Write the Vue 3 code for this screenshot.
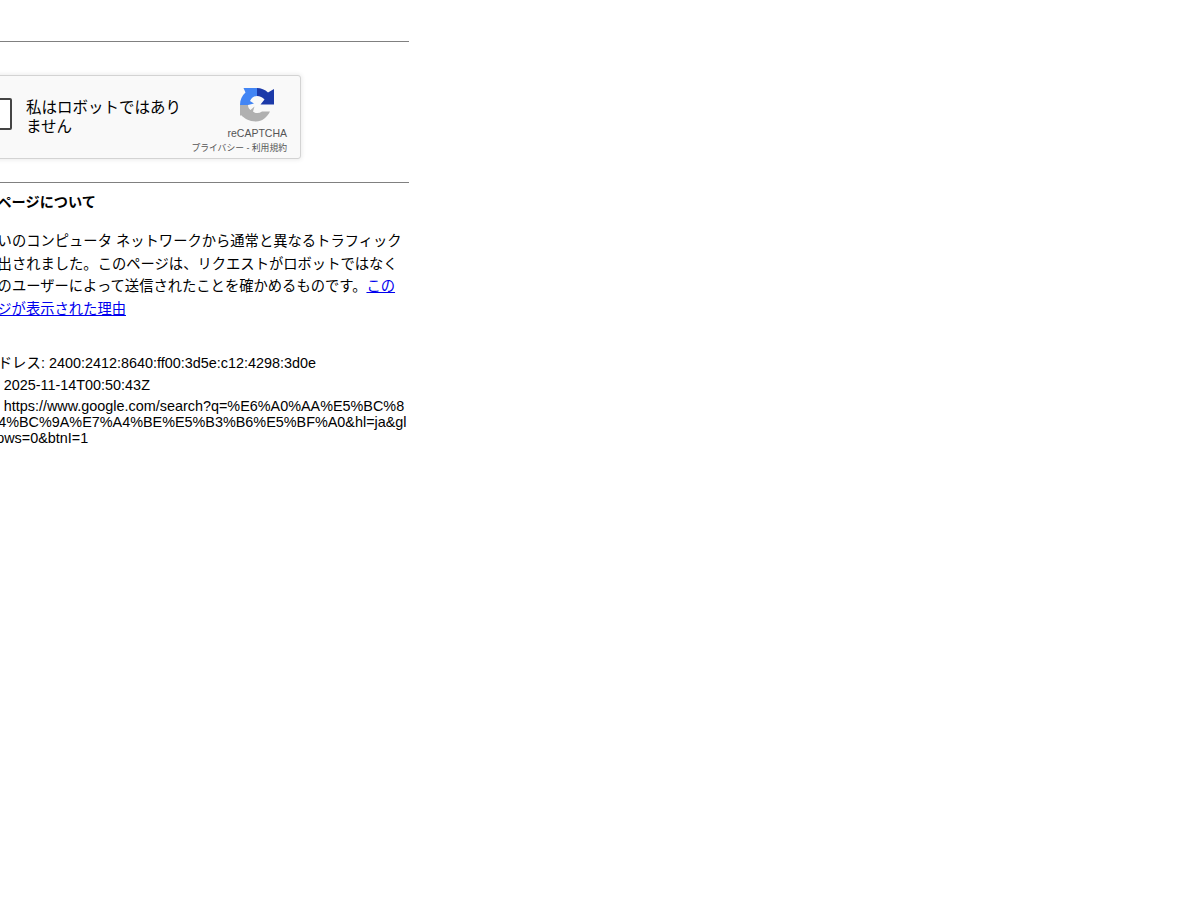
<script setup>
const infoLines = [
  'IP アドレス: 2400:2412:8640:ff00:3d5e:c12:4298:3d0e',
  '時間: 2025-11-14T00:50:43Z',
]
const url = 'URL: https://www.google.com/search?q=%E6%A0%AA%E5%BC%8F%E4%BC%9A%E7%A4%BE%E5%B3%B6%E5%BF%A0&hl=ja&gl=jp&pws=0&btnI=1'
</script>

<template>
  <div class="viewport">
    <main class="page">
      <hr class="rule" />
      <div class="captcha">
        <span class="checkbox"></span>
        <span class="label">私はロボットではありません</span>
        <div class="brand">
          <svg class="logo" viewBox="0 0 34 34" width="34" height="34" aria-hidden="true">
            <path fill="#1c3aa9" d="M17 0C21 0 25 1.500 28 4.500L34 1V16.500H20.500L24.500 11.500C22.500 9.500 20 8 17 8Z" />
            <path fill="#4285f4" d="M3.500 0H17V8C14 8 11.500 10 10 13L14 15.500L8 17H0C0 12 2 7.500 5.500 4.500Z" />
            <path fill="#b0b0b0" d="M0 17H8C8 19 9 21 10.500 22L14.500 18.500L13 23.500C15.500 25.500 19 25.500 22 23.500H30C27 29.500 22 33.500 16 33.500C9 33.500 4 30 1 27L0 28Z" />
          </svg>
          <div class="brand-name">reCAPTCHA</div>
          <div class="terms">プライバシー - 利用規約</div>
        </div>
      </div>
      <hr class="rule rule-lower" />
      <h2 class="title">このページについて</h2>
      <p class="about">
        お使いのコンピュータ ネットワークから通常と異なるトラフィック<br />が検出されました。このページは、リクエストがロボットではなく<br />実際のユーザーによって送信されたことを確かめるものです。<a class="why" href="#">この<br />ページが表示された理由</a>
      </p>
      <div class="info">
        <div v-for="line in infoLines" :key="line" class="info-line">{{ line }}</div>
        <div class="url">{{ url }}</div>
      </div>
    </main>
  </div>
</template>

<style>
html, body { margin: 0; background: #fff; }
</style>

<style scoped>
.viewport {
  width: 1200px;
  height: 900px;
  overflow: hidden;
  background: #fff;
  color: #000;
  font-family: "Liberation Sans", "Noto Sans CJK JP", sans-serif;
  font-size: 14px;
}
.page {
  width: 440px;
  margin-left: -31px;
  padding-top: 41px;
}
.rule {
  margin: 0;
  border: 0;
  height: 1px;
  background: #808080;
}
.captcha {
  box-sizing: border-box;
  display: flex;
  align-items: flex-start;
  width: 332px;
  height: 84px;
  margin-top: 33px;
  background: #f9f9f9;
  border: 1px solid #d3d3d3;
  border-radius: 3px;
  box-shadow: 0 0 4px 1px rgba(0, 0, 0, 0.08);
}
.checkbox {
  box-sizing: border-box;
  flex: none;
  width: 28px;
  height: 32px;
  margin: 22px 0 0 14px;
  background: #fff;
  border: 2px solid #444;
  border-radius: 2px;
}
.label {
  flex: none;
  width: 162px;
  margin: 22px 0 0 14px;
  font-size: 15.500px;
  line-height: 19px;
  color: #000;
}
.brand {
  flex: 1;
  display: flex;
  flex-direction: column;
  align-items: flex-end;
  padding: 12px 13px 0 0;
  color: #555;
}
.logo {
  display: block;
  margin-right: 13px;
}
.brand-name {
  margin-top: 4px;
  font-size: 10.500px;
  line-height: 14px;
}
.terms {
  margin-top: 1px;
  font-size: 8.800px;
  line-height: 14px;
  white-space: nowrap;
}
.rule-lower {
  margin-top: 23px;
}
.title {
  margin: 10px 0 0;
  font-size: 14.200px;
  line-height: 18px;
  font-weight: 700;
}
.about {
  margin: 19.400px 0 0;
  font-size: 14.300px;
  line-height: 22.400px;
  white-space: nowrap;
}
.why {
  color: #00e;
  text-decoration: underline;
}
.info {
  margin: 34.600px 0 0 -2px;
  font-size: 14.400px;
  line-height: 16px;
}
.info-line {
  margin-bottom: 6px;
}
.info-line:first-child {
  margin-left: -1px;
}
.info-line + .url {
  margin-top: -1px;
}
.url {
  width: 440px;
  word-break: break-all;
}
</style>
